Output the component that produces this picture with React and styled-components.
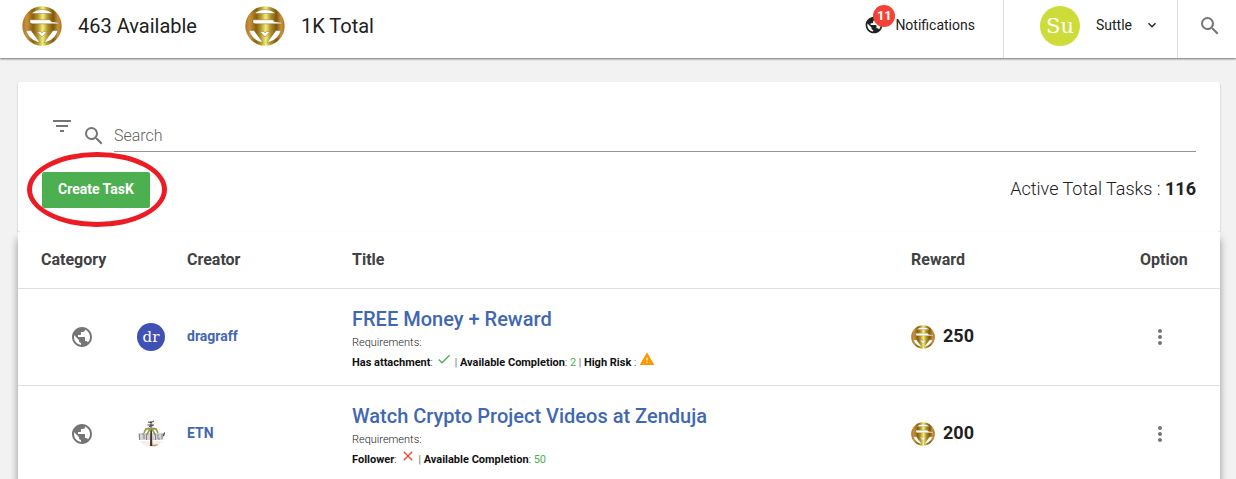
import React, { useState } from "react";
import styled, { createGlobalStyle } from "styled-components";
import {
  MdPublic,
  MdSearch,
  MdFilterList,
  MdMoreVert,
  MdWarning,
  MdCheck,
  MdClose,
  MdExpandMore,
} from "react-icons/md";

const GlobalStyle = createGlobalStyle`
  * {
    box-sizing: border-box;
  }
  body {
    margin: 0;
    background: #f2f2f2;
    color: #212121;
    font-family: Roboto, "Liberation Sans", sans-serif;
    font-size: 14px;
    overflow-x: hidden;
  }
  button {
    font-family: inherit;
    border: none;
    background: none;
    padding: 0;
    cursor: pointer;
  }
  a {
    text-decoration: none;
  }
  svg {
    display: block;
  }
`;

const TopBar = styled.header`
  display: flex;
  height: 58px;
  background: #fff;
  box-shadow: 0 1px 2px rgba(0, 0, 0, 0.55);
`;

const Balances = styled.div`
  display: flex;
  flex: 1;
  gap: 48px;
  padding: 6px 22px;
`;

const Balance = styled.div`
  display: flex;
  align-items: center;
  gap: 16px;
  height: 40px;
  font-size: 20px;
`;

const NotificationsButton = styled.button`
  display: flex;
  align-items: center;
  gap: 11px;
  height: 50px;
  padding-right: 28px;
  font-size: 14px;
  color: #212121;
`;

const BellWrap = styled.span`
  position: relative;
`;

const Badge = styled.span`
  position: absolute;
  top: -10px;
  left: 9px;
  width: 22px;
  height: 22px;
  border-radius: 50%;
  background: #f44336;
  color: #fff;
  font-size: 13px;
  font-weight: 700;
  line-height: 22px;
  text-align: center;
`;

const UserMenu = styled.button`
  display: flex;
  align-items: center;
  gap: 16px;
  padding: 0 17px 6px 36px;
  border-left: 1px solid #e0e0e0;
  font-size: 14px;
  color: #212121;
`;

const UserName = styled.span`
  display: flex;
  align-items: center;
  gap: 12px;
  padding-bottom: 2px;
`;

const SearchButton = styled.button`
  display: flex;
  padding: 14px 14px 0 20px;
  border-left: 1px solid #e0e0e0;
  color: #757575;
`;

const Avatar = styled.span`
  display: block;
  width: ${(p) => p.$size}px;
  height: ${(p) => p.$size}px;
  border-radius: 50%;
  background: ${(p) => p.$color};
  color: #fff;
  font-family: "DejaVu Serif", serif;
  font-size: ${(p) => (p.$size > 30 ? 21 : 15)}px;
  line-height: ${(p) => p.$size}px;
  text-align: center;
`;

const Main = styled.main`
  padding: 24px 16px 0 18px;
`;

const Panel = styled.section`
  padding: 32px 24px 24px;
  background: #fff;
  border-radius: 2px;
  box-shadow: 0 1px 2px rgba(0, 0, 0, 0.25);
`;

const SearchRow = styled.div`
  display: flex;
  align-items: flex-start;
  height: 58px;
  color: #757575;
`;

const FilterButton = styled.button`
  padding: 0 8px;
  color: #757575;
`;

const SearchLabel = styled.label`
  padding: 10px 8px 0 0;
`;

const SearchInput = styled.input`
  flex: 1;
  min-width: 0;
  height: 38px;
  padding: 8px 0 2px;
  border: none;
  border-bottom: 1px solid #949494;
  outline: none;
  background: none;
  font-family: inherit;
  font-size: 16px;
  font-weight: 300;
  color: #212121;

  &::placeholder {
    color: #616161;
    opacity: 1;
  }
`;

const ActionRow = styled.div`
  display: flex;
  align-items: flex-start;
  justify-content: space-between;
`;

const Highlight = styled.div`
  position: relative;
`;

const Ring = styled.span`
  position: absolute;
  inset: -20px -17px -19px -15px;
  border: 5px solid #ed1c24;
  border-radius: 50%;
  pointer-events: none;
`;

const CreateButton = styled.button`
  display: block;
  height: 36px;
  padding: 0 16px 2px;
  border-radius: 2px;
  background: #4caf50;
  color: #fff;
  font-size: 14px;
  font-weight: 700;
`;

const Total = styled.div`
  font-size: 18px;
  line-height: 34px;
  font-weight: 300;

  strong {
    font-weight: 700;
  }
`;

const Table = styled.table`
  width: 100%;
  table-layout: fixed;
  border-collapse: collapse;
  background: #fff;
  box-shadow: 0 7px 8px rgba(0, 0, 0, 0.4);
`;

const HeadCell = styled.th`
  width: ${(p) => (p.$width ? `${p.$width}px` : "auto")};
  height: 56px;
  padding: 0 0 0 ${(p) => p.$indent || 0}px;
  border-bottom: 1px solid #e0e0e0;
  text-align: left;
  font-size: 16px;
  font-weight: 700;
  color: #424242;
`;

const Cell = styled.td`
  height: 97px;
  padding: 0 0 0 ${(p) => p.$indent || 0}px;
  border-bottom: 1px solid #e0e0e0;
`;

const CategoryIcon = styled.span`
  display: flex;
  justify-content: center;
  width: 82px;
  color: #757575;
`;

const CreatorLink = styled.a`
  display: block;
  padding-bottom: 2px;
  font-size: 14px;
  font-weight: 700;
  color: #4267b2;
`;

const TitleLink = styled.a`
  display: block;
  margin-top: 6px;
  font-size: 20px;
  line-height: 24px;
  font-weight: 500;
  color: #4267b2;
`;

const Requirements = styled.div`
  padding-top: 2px;
  font-size: 11px;
  line-height: 20px;
  font-weight: 300;
`;

const Details = styled.div`
  display: flex;
  gap: 3px;
  font-size: 11px;
  line-height: 20px;
  font-weight: 300;

  b {
    color: #111;
    font-weight: 700;
  }

  svg {
    margin-top: -2px;
  }
`;

const Mark = styled.span`
  color: ${(p) => p.$color};
  font-weight: 400;
`;

const Reward = styled.div`
  display: flex;
  align-items: center;
  gap: 8px;
  font-size: 18px;
  line-height: 24px;
  font-weight: 700;
`;

const Amount = styled.span`
  padding-bottom: 2px;
`;

const OptionButton = styled.button`
  padding: 8px;
  color: #757575;
`;

// a gold disc with the white slots of the emblem cut over it
function Coin({ size, id }) {
  return (
    <svg width={size} height={size} viewBox="0 0 40 40" aria-hidden="true">
      <defs>
        <linearGradient id={id} x1="0" x2="40" y1="0" y2="0" gradientUnits="userSpaceOnUse">
          <stop offset="0" stopColor="#a87424" />
          <stop offset="0.12" stopColor="#c8923c" />
          <stop offset="0.28" stopColor="#8a5f0c" />
          <stop offset="0.4" stopColor="#b59a2c" />
          <stop offset="0.52" stopColor="#f2ee7c" />
          <stop offset="0.64" stopColor="#b0942a" />
          <stop offset="0.78" stopColor="#80560a" />
          <stop offset="0.9" stopColor="#c8923c" />
          <stop offset="1" stopColor="#a87424" />
        </linearGradient>
      </defs>
      <circle cx="20" cy="20" r="19.700" fill={`url(#${id})`} />
      <g fill="#fff" stroke="#7a5a1c" strokeWidth="0.400">
        <path d="M9.500 7.500C15 2.300 25 2.300 30.500 7.500z" />
        <path d="M8 13.800h19.500l2 2 7 .7.300 1.300H10.500L8 17z" />
        <path d="M4 24.500h5l9 12C11 35.500 6 31 4 24.500z" />
        <path d="M36 24.500h-5l-9 12C29 35.500 34 31 36 24.500z" />
        <path d="M15 25.500h3.500l1.500 1.500 1.500-1.500H25L20 31z" />
      </g>
    </svg>
  );
}

function PalmAvatar() {
  return (
    <svg width="28" height="28" viewBox="0 0 28 28" role="img" aria-label="ETN">
      <path d="M1 13h26l-1 7H2z" fill="#d4d4d4" />
      <path
        d="M2.500 14v6M5 14h2v5M9.500 14v6M18.500 14v6M21 14v5h2M25 14v5"
        stroke="#85817d"
        strokeWidth="1"
        fill="none"
      />
      <path d="M27 12.500h1l-1 4-1-1z" fill="#222" />
      <path d="M3 21h22l-3 4c-5 2-11 2-16 0z" fill="#f4efea" />
      <path d="M12 25.500l5-1h5l-4 2z" fill="#cf9870" />
      <path d="M13.400 8L13 26h2.300L14.900 8z" fill="#49342b" />
      <path
        d="M14 9c-3-2-6 0-7 4M14 9c-2 1-3 3-4 6M14 9c3-2 6 0 7 4M14 9c2 1 3 3 4 6M14 9H8M14 9h6"
        stroke="#94994c"
        strokeWidth="1.500"
        fill="none"
      />
      <path d="M11 2l3 .6L17 1M14 1v7M10.500 5H17M12 6.500l4-1" stroke="#423f42" strokeWidth="1" fill="none" />
    </svg>
  );
}

const tasks = [
  {
    id: 1,
    creator: "dragraff",
    avatar: (
      <Avatar $size={28} $color="#3f51b5">
        dr
      </Avatar>
    ),
    title: "FREE Money + Reward",
    check: { label: "Has attachment", ok: true },
    available: 2,
    highRisk: true,
    reward: 250,
  },
  {
    id: 2,
    creator: "ETN",
    avatar: <PalmAvatar />,
    title: "Watch Crypto Project Videos at Zenduja",
    check: { label: "Follower", ok: false },
    available: 50,
    highRisk: false,
    reward: 200,
  },
];

function TaskRow({ task }) {
  return (
    <tr>
      <Cell $indent={23}>
        <CategoryIcon>
          <MdPublic size={24} />
        </CategoryIcon>
      </Cell>
      <Cell>{task.avatar}</Cell>
      <Cell>
        <CreatorLink href="#creator">{task.creator}</CreatorLink>
      </Cell>
      <Cell>
        <TitleLink href="#task">{task.title}</TitleLink>
        <Requirements>Requirements:</Requirements>
        <Details>
          <span>
            <b>{task.check.label}</b>:
          </span>
          <Mark $color={task.check.ok ? "#4caf50" : "#f44336"}>
            {task.check.ok ? <MdCheck size={16} /> : <MdClose size={16} />}
          </Mark>
          <span>
            | <b>Available Completion</b>: <Mark $color="#4caf50">{task.available}</Mark>
            {task.highRisk && (
              <>
                {" "}
                | <b>High Risk</b> :
              </>
            )}
          </span>
          {task.highRisk && (
            <Mark $color="#ff9800">
              <MdWarning size={16} />
            </Mark>
          )}
        </Details>
      </Cell>
      <Cell>
        <Reward>
          <Coin size={24} id={`coin-task-${task.id}`} />
          <Amount>{task.reward}</Amount>
        </Reward>
      </Cell>
      <Cell>
        <OptionButton aria-label="Options">
          <MdMoreVert size={24} />
        </OptionButton>
      </Cell>
    </tr>
  );
}

function App() {
  const [search, setSearch] = useState("");

  return (
    <>
      <GlobalStyle />
      <TopBar>
        <Balances>
          <Balance>
            <Coin size={40} id="coin-available" />
            463 Available
          </Balance>
          <Balance>
            <Coin size={40} id="coin-total" />
            1K Total
          </Balance>
        </Balances>
        <NotificationsButton>
          <BellWrap>
            <MdPublic size={20} />
            <Badge>11</Badge>
          </BellWrap>
          Notifications
        </NotificationsButton>
        <UserMenu>
          <Avatar $size={40} $color="#cddc39">
            Su
          </Avatar>
          <UserName>
            Suttle
            <MdExpandMore size={16} />
          </UserName>
        </UserMenu>
        <SearchButton aria-label="Search">
          <MdSearch size={24} />
        </SearchButton>
      </TopBar>
      <Main>
        <Panel>
          <SearchRow>
            <FilterButton aria-label="Filter">
              <MdFilterList size={24} />
            </FilterButton>
            <SearchLabel htmlFor="search" aria-label="Search">
              <MdSearch size={24} />
            </SearchLabel>
            <SearchInput
              id="search"
              type="text"
              placeholder="Search"
              value={search}
              onChange={(e) => setSearch(e.target.value)}
            />
          </SearchRow>
          <ActionRow>
            <Highlight>
              <CreateButton>Create TasK</CreateButton>
              <Ring />
            </Highlight>
            <Total>
              Active Total Tasks : <strong>116</strong>
            </Total>
          </ActionRow>
        </Panel>
        <Table>
          <thead>
            <tr>
              <HeadCell $width={119} $indent={23}>
                Category
              </HeadCell>
              <HeadCell $width={50} />
              <HeadCell $width={165}>Creator</HeadCell>
              <HeadCell>Title</HeadCell>
              <HeadCell $width={229}>Reward</HeadCell>
              <HeadCell $width={80}>Option</HeadCell>
            </tr>
          </thead>
          <tbody>
            {tasks.map((task) => (
              <TaskRow key={task.id} task={task} />
            ))}
          </tbody>
        </Table>
      </Main>
    </>
  );
}

export default App;
